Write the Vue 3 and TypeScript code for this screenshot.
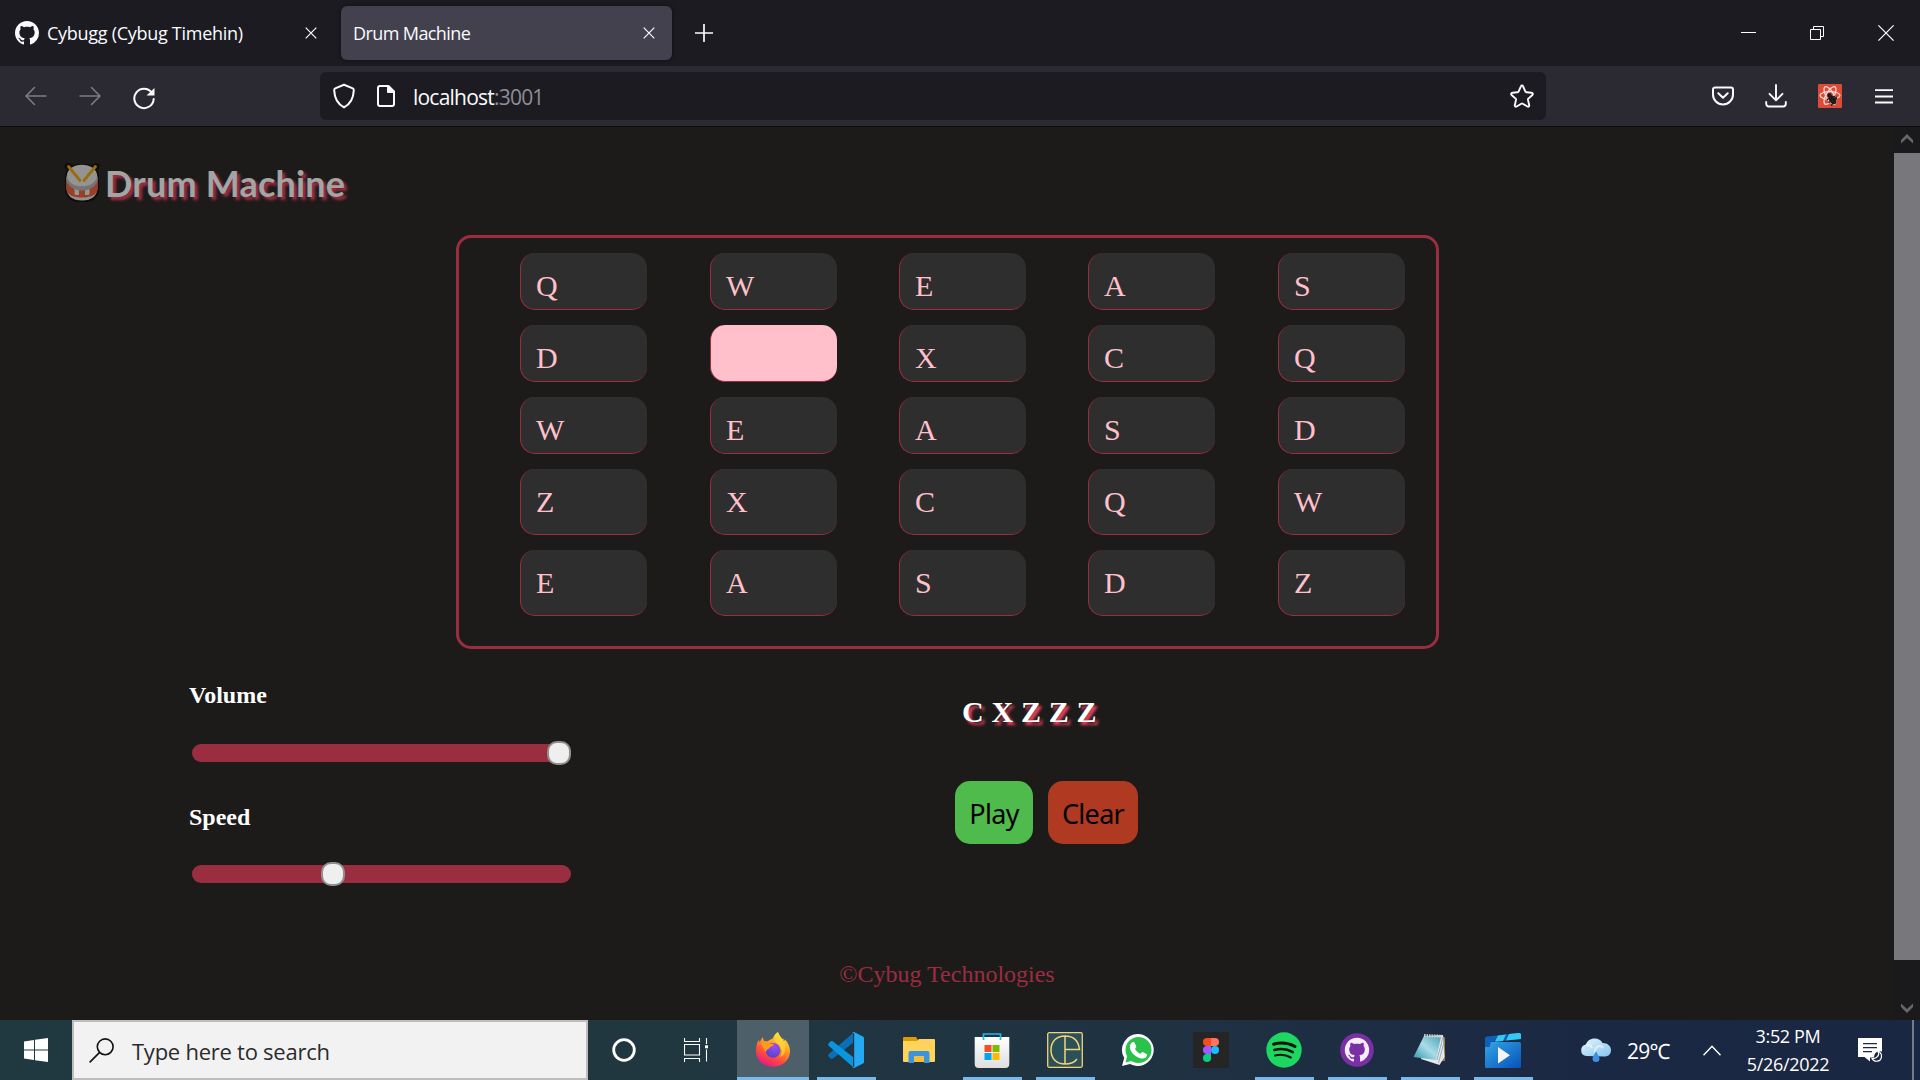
<script setup lang="ts">
interface Control {
  label: string
  value: number
}

const rows: string[][] = [
  ['Q', 'W', 'E', 'A', 'S'],
  ['D', 'Z', 'X', 'C', 'Q'],
  ['W', 'E', 'A', 'S', 'D'],
  ['Z', 'X', 'C', 'Q', 'W'],
  ['E', 'A', 'S', 'D', 'Z'],
]
const active = { row: 1, col: 1 }
const played: string[] = ['C', 'X', 'Z', 'Z', 'Z']
const controls: Control[] = [
  { label: 'Volume', value: 1 },
  { label: 'Speed', value: 0.3634 },
]
const thumbOffset = (value: number): string => `${Math.round(value * 355)}px`
</script>

<template>
  <div class="screen">
    <header class="tabs">
      <div class="tab">
        <svg class="gh" width="24" height="24" viewBox="0 0 16 16"><path fill="#fbfbfe" d="M8 0C3.58 0 0 3.58 0 8c0 3.54 2.29 6.53 5.47 7.59.4.07.55-.17.55-.38 0-.19-.01-.82-.01-1.49-2.01.37-2.53-.49-2.69-.94-.09-.23-.48-.94-.82-1.13-.28-.15-.68-.52-.01-.53.63-.01 1.08.58 1.23.82.72 1.21 1.87.87 2.33.66.07-.52.28-.87.51-1.07-1.78-.2-3.64-.89-3.64-3.95 0-.87.31-1.59.82-2.15-.08-.2-.36-1.02.08-2.12 0 0 .67-.21 2.2.82.64-.18 1.32-.27 2-.27s1.36.09 2 .27c1.53-1.04 2.2-.82 2.2-.82.44 1.1.16 1.92.08 2.12.51.56.82 1.27.82 2.15 0 3.07-1.87 3.75-3.65 3.95.29.25.54.73.54 1.48 0 1.07-.01 1.93-.01 2.2 0 .21.15.46.55.38A8.01 8.01 0 0 0 16 8c0-4.42-3.58-8-8-8z" /></svg>
        <span class="ui tab-a">Cybugg (Cybug Timehin)</span>
        <svg class="x" width="12" height="12" viewBox="0 0 12 12"><path d="M.7.7l10.6 10.6M11.3.7L.7 11.3" stroke="#fbfbfe" stroke-width="1.2" /></svg>
      </div>
      <div class="tab current">
        <span class="ui tab-b">Drum Machine</span>
        <svg class="x" width="12" height="12" viewBox="0 0 12 12"><path d="M.7.7l10.6 10.6M11.3.7L.7 11.3" stroke="#fbfbfe" stroke-width="1.2" /></svg>
      </div>
      <svg class="plus" width="18" height="18" viewBox="0 0 18 18"><path d="M9 .5v17M.5 9h17" stroke="#fbfbfe" stroke-width="1.7" stroke-linecap="round" /></svg>
      <div class="window-buttons">
        <svg width="15" height="16" viewBox="0 0 15 16"><path d="M0 7.5h15" stroke="#fff" /></svg>
        <svg width="14" height="14" viewBox="0 0 14 14" fill="none" stroke="#fff"><path d="M.5 3.5h10v10h-10zM3.500 3.500v-3h10v10h-3" /></svg>
        <svg width="16" height="16" viewBox="0 0 16 16"><path d="M.4.4l15.200 15.200M15.600.4L.4 15.600" stroke="#fff" stroke-width="1.2" /></svg>
      </div>
    </header>

    <nav class="toolbar">
      <div class="history">
        <svg width="22" height="20" viewBox="0 0 22 20" fill="none" stroke="#7c7b82" stroke-width="1.6" stroke-linecap="round" stroke-linejoin="round"><path d="M21 10H1M9.500 1.500L1 10l8.500 8.500" /></svg>
        <svg width="22" height="20" viewBox="0 0 22 20" fill="none" stroke="#7c7b82" stroke-width="1.6" stroke-linecap="round" stroke-linejoin="round"><path d="M1 10h20M12.500 1.500L21 10l-8.500 8.500" /></svg>
        <svg class="reload" width="24" height="24" viewBox="0 0 24 24" fill="none" stroke="#fbfbfe" stroke-width="2" stroke-linecap="round"><path d="M19.800 6.600A9.700 9.700 0 1 0 21.700 13" /><path d="M22.500 2v7.500h-8z" fill="#fbfbfe" stroke="none" /></svg>
      </div>
      <div class="address">
        <svg width="22" height="26" viewBox="0 0 22 26" fill="none" stroke="#fbfbfe" stroke-width="2" stroke-linejoin="round"><path d="M11 1.800l8.800 3.600c1 .4 1 1 1 2-.3 7-3 13.500-9.800 17C4.200 20.900 1.500 14.400 1.200 7.400c0-1 0-1.600 1-2z" /></svg>
        <svg class="doc" width="18" height="22" viewBox="0 0 18 22" fill="none" stroke="#fbfbfe" stroke-width="2" stroke-linejoin="round"><path d="M3 1h8.500L17 6.500V19a2 2 0 0 1-2 2H3a2 2 0 0 1-2-2V3a2 2 0 0 1 2-2z" /><path d="M10.500 1v6.500H17L11.500 1z" fill="#fbfbfe" stroke-width="1" /></svg>
        <span class="ui url">localhost<span class="port">:3001</span></span>
        <svg class="star" width="24" height="24" viewBox="0 0 24 24" fill="none" stroke="#fbfbfe" stroke-width="1.900" stroke-linejoin="round"><path d="M12 1.500c.5 0 .9.3 1.100.8l2.200 5.100c.2.500.6.8 1.100.8l5.200.6c1.200.1 1.700 1.400.8 2.200l-4 3.600c-.4.300-.5.8-.4 1.300l1.200 5.300c.2 1.100-.8 1.900-1.800 1.300l-4.700-2.800c-.5-.300-.9-.300-1.400 0L6.600 22.500c-1 .6-2-.2-1.800-1.300L6 15.900c.1-.500 0-1-.4-1.300L1.600 11c-.9-.8-.4-2.100.8-2.200l5.200-.6c.5 0 .9-.300 1.100-.8l2.200-5.100c.2-.500.6-.8 1.100-.8z" /></svg>
      </div>
      <div class="extensions">
        <svg width="22" height="20" viewBox="0 0 22 20" fill="none" stroke="#fbfbfe" stroke-width="2" stroke-linecap="round" stroke-linejoin="round"><path d="M3 1.400h16a2 2 0 0 1 2 2V8.500a10 10 0 0 1-20 0V3.400a2 2 0 0 1 2-2zM6.300 7.200l4.700 4.500 4.700-4.500" /></svg>
        <svg class="download" width="22" height="24" viewBox="0 0 22 24" fill="none" stroke="#fbfbfe" stroke-width="1.900" stroke-linecap="round" stroke-linejoin="round"><path d="M11 1v15M4.500 9.800L11 16.300l6.500-6.500M1.200 18v1.800a2.700 2.700 0 0 0 2.700 2.700h14.200a2.700 2.700 0 0 0 2.700-2.700V18" /></svg>
        <svg class="react" width="24" height="24" viewBox="0 0 24 24"><rect width="24" height="24" rx="1" fill="#dc4a38" /><g fill="none" stroke="#f7dcd6" stroke-width="1.300"><ellipse cx="12" cy="11.500" rx="10" ry="3.900" /><ellipse cx="12" cy="11.500" rx="10" ry="3.900" transform="rotate(60 12 11.500)" /><ellipse cx="12" cy="11.500" rx="10" ry="3.900" transform="rotate(120 12 11.500)" /></g><g transform="rotate(-35 14 15)"><ellipse cx="14" cy="16" rx="3.200" ry="5" fill="#201b1b" /><circle cx="14" cy="10.500" r="2.200" fill="#201b1b" /><path d="M9.500 12.500l9 2M9 16h10M9.500 20l9-3" stroke="#201b1b" stroke-width="1.300" /></g></svg>
        <svg width="18" height="15" viewBox="0 0 18 15"><path d="M0 1.200h18M0 7.500h18M0 13.500h18" stroke="#fbfbfe" stroke-width="1.800" /></svg>
      </div>
    </nav>

    <div class="viewport">
      <main class="page">
        <h1 class="brand">
          <svg width="36" height="40" viewBox="0 0 36 40">
            <rect x="1" y="1" width="34" height="38" rx="13" fill="#050505" />
            <circle cx="4" cy="3.500" r="3.500" fill="#050505" /><circle cx="32" cy="3.500" r="3.500" fill="#050505" />
            <path d="M2.500 14h31v10c0 9-6 13.500-15.500 13.500S2.500 33 2.500 24z" fill="#e2e2e2" />
            <path d="M2.500 16h31v11c-1.500 5-6.500 7.500-15.500 7.500S4 32 2.500 27z" fill="#ee5630" />
            <path d="M10.500 24h4.500v8h-3a1.500 1.500 0 0 1-1.500-1.500zM21 24h4.500v6.500A1.500 1.500 0 0 1 24 32h-3z" fill="#e8e8e8" />
            <ellipse cx="18" cy="15.500" rx="15.700" ry="12" fill="#b0b0b0" /><ellipse cx="18" cy="12.500" rx="15" ry="10.800" fill="#e4e4e4" />
            <path d="M4.500 3.500L16 17.500M31.500 3.500L20 17.500" stroke="#e9a500" stroke-width="2.800" stroke-linecap="round" />
          </svg>
          <span>Drum Machine</span>
        </h1>

        <section class="board">
          <div v-for="(row, r) in rows" :key="r" class="pad-row" :class="{ tall: r > 2 }">
            <button v-for="(key, c) in row" :key="c" class="pad" :class="{ active: r === active.row && c === active.col }">{{ key }}</button>
          </div>
        </section>

        <section class="panel">
          <div class="sliders">
            <div v-for="item in controls" :key="item.label" class="control">
              <label>{{ item.label }}</label>
              <div class="track"><i class="thumb" :style="{ marginLeft: thumbOffset(item.value) }"></i></div>
            </div>
          </div>
          <div class="player">
            <div class="display">{{ played.join(' ') }}</div>
            <div class="buttons">
              <button class="play">Play</button>
              <button class="clear">Clear</button>
            </div>
          </div>
        </section>

        <footer>©Cybug Technologies</footer>
      </main>
      <aside class="scrollbar">
        <svg width="12" height="10" viewBox="0 0 12 10"><path d="M0 9.500V6l6-6 6 6v3.500L6 4z" fill="#67666b" /></svg>
        <div class="scroll-thumb"></div>
        <svg class="down" width="12" height="10" viewBox="0 0 12 10"><path d="M0 .5V4l6 6 6-6V.5L6 6z" fill="#67666b" /></svg>
      </aside>
    </div>

    <div class="taskbar">
      <div class="start"><svg width="24" height="24" viewBox="0 0 24 24" fill="#fff"><path d="M0 3.500L10 2v9.500H0zM11 1.800L24 0v11.500H11zM0 12.500h10V22L0 20.500zM11 12.500h13V24l-13-1.800z" /></svg></div>
      <div class="search">
        <svg width="25" height="25" viewBox="0 0 25 25" fill="none" stroke="#111" stroke-width="1.600"><circle cx="16.200" cy="8.800" r="7.900" /><path d="M10.600 14.400L.6 24.400" /></svg>
        <span class="ui">Type here to search</span>
      </div>
      <div class="cell first"><svg width="24" height="24" viewBox="0 0 24 24" fill="none"><circle cx="12" cy="12" r="10.300" stroke="#fff" stroke-width="2.800" /></svg></div>
      <div class="cell second"><svg width="24" height="24" viewBox="0 0 24 24" fill="none" stroke="#fff" stroke-width="1.100"><path d="M.5 0v3.500h15V0M.5 24v-3.500h15V24M.5 6.500h15v10.500H.5zM22.500 0v6M22.500 11.500V23.500" /><path d="M21 7.300h3v3h-3z" fill="#fff" stroke="none" /></svg></div>
      <div class="cell focused">
        <svg width="36" height="36" viewBox="0 0 36 36">
          <defs><linearGradient id="fx" x1=".8" y1="0" x2=".3" y2="1"><stop offset="0" stop-color="#fff14a" /><stop offset=".4" stop-color="#ff9f22" /><stop offset=".7" stop-color="#ff4a3e" /><stop offset="1" stop-color="#e3188b" /></linearGradient><radialGradient id="fp" cx=".6" cy=".25" r=".8"><stop offset="0" stop-color="#a04bf5" /><stop offset="1" stop-color="#4b46c8" /></radialGradient></defs>
          <path fill="url(#fx)" d="M23 0c1 3 3 5 4.500 7l1-.5.3 3 1.200-2c3 3 5 7.500 5 11.500 0 9-7 15.700-17 15.700S1 28 1 19C1 14 2 10 4 8l.6 2.500L7.500 5l1.500 4 4 .3C15 7 18 7 18 6c1-3 3-5 5-6z" />
          <circle cx="18" cy="18.300" r="7.400" fill="url(#fp)" />
          <path fill="#ff9a20" d="M6 11c3-1 5-1 7 .2 3 .8 5 .3 6 1-1 2.500-4 2-5 4.500-1 0-2.500 1-3.200 3.300C8 17 8 14 6 11z" /><path fill="#ffd83a" opacity=".75" d="M23 0c0 6 9 9 7 17 0 4-2 7-5 8 3-4 2-9-2-13-4-2-5-7 0-12z" />
        </svg>
      </div>
      <div class="cell open"><svg width="36" height="36" viewBox="0 0 36 36"><path fill="#0a6fb7" d="M25 1v10L5 26.500c-1 .6-2 .5-2.600-.1L.7 24.700c-.7-.8-.7-1.800.2-2.600z" /><path fill="#0995df" d="M25 35V25L5 9.500c-1-.6-2-.5-2.600.1L.7 11.300c-.7.8-.7 1.800.2 2.600z" /><path fill="#25a9f2" d="M26.500.3L35 4.400c.6.300 1 .9 1 1.600v24c0 .7-.4 1.300-1 1.600l-8.500 4.100c-1 .4-2 .1-2.600-.7 1 .6 2.300 0 2.300-1.300V2.300C26.200 1 25 .4 23.900 1c.6-.8 1.600-1.100 2.600-.7z" /></svg></div>
      <div class="cell"><svg width="36" height="36" viewBox="0 0 36 36"><path fill="#dc9a00" d="M2 6a1 1 0 0 1 1-1h12l2 3v4H2z" /><path fill="#ffd35c" d="M2 9h14l2-2h15a1 1 0 0 1 1 1v21a1 1 0 0 1-1 1H3a1 1 0 0 1-1-1z" /><path fill="#3d94da" d="M9.500 19h17a2 2 0 0 1 2 2v10H23v-7H13v7H7.500V21a2 2 0 0 1 2-2z" /><path fill="#f6bd3c" d="M13 24h10v6H13z" /></svg></div>
      <div class="cell open"><svg width="36" height="36" viewBox="0 0 36 36"><defs><linearGradient id="st" x2="0" y2="1"><stop stop-color="#fff" /><stop offset="1" stop-color="#dedede" /></linearGradient></defs><path d="M.7 5h34.600v27a4 4 0 0 1-4 4H4.700a4 4 0 0 1-4-4z" fill="url(#st)" /><path d="M9.500 8V2h17v6" fill="none" stroke="#20b6ee" stroke-width="1.700" /><path fill="#f25022" d="M10.500 13h7v7h-7z" /><path fill="#7fba00" d="M18.500 13h7v7h-7z" /><path fill="#00a4ef" d="M10.500 21h7v7h-7z" /><path fill="#ffb900" d="M18.500 21h7v7h-7z" /></svg></div>
      <div class="cell open"><svg width="36" height="36" viewBox="0 0 36 36" fill="none" stroke="#f2d27c"><rect x=".7" y=".7" width="34.600" height="34.600" rx="1.500" fill="#2b5057" stroke-width="1.300" /><path stroke-width="1.500" d="M30 27c-2.500 3.500-6.500 5-12 5C9.500 32 4 26.500 4 18S9.500 4 18 4c8.500 0 13.500 5 14.500 13.500H18M18 4v28" /></svg></div>
      <div class="cell"><svg width="34" height="34" viewBox="0 0 34 34"><path fill="#fff" d="M17.500 1A16 16 0 1 1 9 31L1 33l2.200-8A16 16 0 0 1 17.500 1z" /><circle cx="17.500" cy="17" r="13" fill="#29c34c" /><path fill="#29c34c" d="M4.500 29.500l1.800-7 5 5.300z" /><path fill="#fff" d="M11 9.500c1-.8 2.300-.6 2.800.4l1.400 3.300c.3.800-.2 1.500-1.200 2.500 1.300 2.400 3 4 5.500 5.100 1.200-1.500 1.800-2 2.600-1.600l3.400 1.700c.9.400.8 1.500.1 2.700-1.300 2-4 2.400-6.400 1.600-5.500-1.800-8.500-5.200-10-9-.8-2.400-.2-5.200 1.800-6.700z" /></svg></div>
      <div class="cell"><svg width="36" height="36" viewBox="0 0 36 36"><rect width="36" height="36" rx="2" fill="#252525" /><path fill="#f24e1e" d="M18 6h-4a4 4 0 0 0 0 8h4z" /><path fill="#ff7262" d="M18 6h4a4 4 0 0 1 0 8h-4z" /><path fill="#a259ff" d="M18 14h-4a4 4 0 0 0 0 8h4z" /><circle cx="22" cy="18" r="4" fill="#1abcfe" /><path fill="#0acf83" d="M18 22h-4a4 4 0 1 0 4 4z" /></svg></div>
      <div class="cell open"><svg width="36" height="36" viewBox="0 0 36 36" fill="none" stroke="#0b130d" stroke-linecap="round"><circle cx="18" cy="18" r="17.700" fill="#1ed760" stroke="none" /><path stroke-width="3" d="M7.500 12.200c7-2 15-1.300 21.500 2.300" /><path stroke-width="2.500" d="M8.300 18c6.500-1.700 13-1 18.600 2.200" /><path stroke-width="2.100" d="M9 23.500c5.500-1.300 11-.8 15.800 2" /></svg></div>
      <div class="cell open"><svg width="34" height="34" viewBox="0 0 34 34"><circle cx="17" cy="17" r="16.800" fill="#7b2fa5" /><g transform="translate(4.800 4.800) scale(1.525)"><path fill="#f4eef8" d="M8 0C3.580 0 0 3.580 0 8c0 3.540 2.290 6.530 5.470 7.590.4.070.55-.17.55-.38 0-.19-.01-.82-.01-1.490-2.010.37-2.530-.49-2.690-.94-.09-.23-.48-.94-.82-1.130-.28-.15-.68-.52-.01-.53.63-.01 1.080.58 1.230.82.72 1.210 1.870.87 2.330.66.070-.52.28-.87.510-1.070-1.780-.2-3.640-.89-3.640-3.950 0-.87.310-1.590.82-2.150-.08-.2-.36-1.020.08-2.120 0 0 .67-.21 2.200.82.64-.18 1.320-.27 2-.27s1.360.09 2 .27c1.530-1.040 2.200-.82 2.200-.82.44 1.100.16 1.920.08 2.120.51.56.82 1.270.82 2.150 0 3.070-1.870 3.750-3.650 3.950.29.25.54.73.54 1.480 0 1.070-.01 1.930-.01 2.200 0 .21.15.46.55.38A8.010 8.010 0 0 0 16 8c0-4.420-3.580-8-8-8z" /></g></svg></div>
      <div class="cell open"><svg width="36" height="36" viewBox="0 0 36 36"><defs><linearGradient id="np" x1="0" y1="1" x2="1" y2="0"><stop stop-color="#2d93a8" /><stop offset=".5" stop-color="#a9dde8" /><stop offset="1" stop-color="#4ea4b6" /></linearGradient></defs><path fill="#a77a36" d="M30 4l3 1.500V29h-5z" /><path fill="#e3e9ec" d="M12 4l19-1 1.500 22-5 8L9 27z" /><path fill="url(#np)" d="M12 4l17 1-5 23L1.500 25z" /><path d="M25 28l6-23M26.500 31l5.500-21" stroke="#9daeb5" fill="none" /><path d="M12 3.500l18 .8" stroke="#c8ced1" stroke-width="3" stroke-dasharray="1.500 1" /></svg></div>
      <div class="cell open"><svg width="36" height="36" viewBox="0 0 36 36"><defs><linearGradient id="mv" x2="1" y2="1"><stop stop-color="#35a5e6" /><stop offset="1" stop-color="#0652b8" /></linearGradient></defs><rect y="10" width="36" height="26" rx="1.500" fill="url(#mv)" /><path fill="#0f60b8" d="M0 6.500a2 2 0 0 1 2-2L34 1c1 0 2 .5 2 1.500V7L6 10l-1.500 5H0z" /><path fill="#35c8f5" d="M13 3.400l8-1-3 6.500-8 .8zM24 2l9-1c2 0 3 .5 3 1.500V7l-15 1.500z" /><path fill="#f4f4f4" d="M13 15l12 8.200L13 31.500z" /></svg></div>

      <div class="tray">
        <svg width="32" height="24" viewBox="0 0 32 24"><defs><linearGradient id="cl" x2="1" y2="1"><stop stop-color="#e4f6ff" /><stop offset="1" stop-color="#86c4ef" /></linearGradient></defs><path fill="url(#cl)" d="M6.500 18A5.800 5.800 0 0 1 6 6.500C7 2.700 10.500.5 14.500.5s6.500 1.500 8 4.500c4-.3 8.500 2.500 8.500 7S28 18.500 24.500 18.500z" /><path d="M6 7c2-1 5 0 6 3M15 15c-1-6 5-9 8-5" stroke="#fff" opacity=".6" stroke-width="2" fill="none" /><path fill="#3f90e2" d="M16 13c1 3 3.500 5 3.500 7.500a3.500 3.500 0 0 1-7 0C12.500 18 15 16 16 13z" /></svg>
        <span class="ui temp">29℃</span>
        <svg class="chev" width="18" height="11" viewBox="0 0 18 11" fill="none" stroke="#fff" stroke-width="1.400"><path d="M.5 10.200L9 1.200l8.500 9" /></svg>
        <div class="clock ui"><span class="time">3:52 PM</span><span class="date">5/26/2022</span></div>
        <svg width="25" height="25" viewBox="0 0 25 25"><path fill="#fff" d="M0 0h24v13.500a6 6 0 0 0-8 6H12v4L6.500 19H0z" /><path d="M5 5.700h14M5 9.700h14M5 13.700h9" stroke="#1b2942" stroke-width="1.200" /><path d="M20 13c2 4-1 8-6 7.500 2 4 9.500 4 9.500-2.500 0-2-1.500-4-3.500-5z" fill="#1b2942" stroke="#fff" stroke-width="1.200" /></svg>
        <i class="peek"></i>
      </div>
    </div>
  </div>
</template>

<style>
body { margin: 0; overflow: hidden; background: #1c1b19; }
</style>

<style scoped>
* { box-sizing: border-box; }
svg { display: block; flex: none; }
button { margin: 0; border: 0; display: block; }
.screen { width: 1920px; height: 1080px; display: flex; flex-direction: column; font-family: "Liberation Serif", serif; overflow: hidden; }
.ui { font-family: "Open Sans", "Noto Sans", sans-serif; white-space: nowrap; }

.tabs { height: 66px; flex: none; display: flex; align-items: center; background: #1c1b22; color: #fbfbfe; }
.tab { height: 54px; width: 331px; display: flex; align-items: center; padding: 0 17px 0 12px; border-radius: 6px; font-size: 18px; }
.tab:first-child { margin-left: 3px; margin-right: 7px; }
.tab .x { margin-left: auto; }
.gh { margin-right: 8px; }
.tab-a { letter-spacing: -0.28px; }
.tab-b { letter-spacing: -0.6px; }
.current { background: #42414d; box-shadow: 0 0 4px #0008; }
.plus { margin-left: 23px; }
.window-buttons { margin-left: auto; padding-right: 26px; display: flex; align-items: center; gap: 54px; }

.toolbar { height: 61px; flex: none; display: flex; align-items: center; background: #2b2a33; border-bottom: 1px solid #0c0c0d; }
.history { width: 320px; padding-left: 25px; display: flex; align-items: center; gap: 32px; }
.reload { margin: 3px 0 0 -1px; }
.address { width: 1226px; height: 48px; padding: 0 12px 0 13px; display: flex; align-items: center; background: #1c1b22; border-radius: 6px; }
.doc { margin-left: 22px; }
.url { margin-left: 18px; padding-top: 2px; font-size: 21px; letter-spacing: -0.78px; color: #fbfbfe; }
.port { color: #8f8e95; }
.star { margin-left: auto; }
.extensions { margin-left: auto; padding-right: 27px; display: flex; align-items: center; }
.download { margin: 0 31px; }
.react { margin-right: 33px; }

.viewport { height: 893px; flex: none; display: flex; }
.page { width: 1894px; background: #1c1b19; display: flex; flex-direction: column; }
.brand { height: 108px; margin: 0; padding: 36px 0 0 64px; display: flex; gap: 5px; opacity: 0.6; font: bold 36px/40px Lato, sans-serif; letter-spacing: 0.2px; color: #fff; text-shadow: 3px 3px 3px #ff3c63; }
.board { width: 983px; height: 414px; margin-left: 456px; padding: 15px 31px 27px 61px; display: flex; flex-direction: column; gap: 15px; border: 3px solid #9b2d41; border-radius: 15px; }
.pad-row { height: 57px; display: grid; grid-template-columns: 190px 189px 189px 190px 127px; }
.tall { height: 66px; }
.pad { width: 127px; height: 100%; padding: 16px 15px 0; display: flex; align-items: flex-start; background: #2e2e2e; border-left: 1px solid #9b2d41; border-bottom: 1px solid #9b2d41; border-radius: 15px; font: 30px/34px "Liberation Serif", serif; color: pink; }
.pad.active { background: pink; }

.panel { height: 274px; display: flex; }
.sliders { width: 955px; padding: 32px 0 0 189px; }
.control { height: 121px; }
.control label { display: block; height: 60px; font-weight: bold; font-size: 24px; line-height: 28px; color: #fff; }
.control:last-child label { padding-top: 1px; }
.track { width: 379px; height: 18px; margin: 3px 0 0 3px; display: flex; align-items: center; background: #9b2d41; border-radius: 9px; }
.thumb { width: 24px; height: 24px; flex: none; background: #efefef; border: 2px solid #8f8f8f; border-radius: 10px; }
.player { padding-top: 46px; }
.display { height: 86px; padding-left: 7px; font-weight: bold; font-size: 30px; line-height: 34px; letter-spacing: 0.15px; color: #fff; text-shadow: 3px 3px 3px #f04263; }
.buttons { display: flex; gap: 15px; }
.buttons button { height: 63px; padding: 1px 0 0; border-radius: 15px; font-family: "Noto Sans", sans-serif; font-size: 27px; letter-spacing: -0.7px; color: #000; }
.play { width: 78px; background: #4ebb4c; }
.clear { width: 90px; background: #b03a21; }
footer { padding-top: 37px; text-align: center; font-size: 24px; line-height: 28px; color: #9b2d41; }
.scrollbar { width: 26px; padding: 7px 0; display: flex; flex-direction: column; align-items: center; background: #1a191c; }
.scroll-thumb { width: 26px; height: 807px; margin-top: 9px; background: #78777b; }
.down { margin-top: auto; }

.taskbar { height: 60px; flex: none; display: flex; background: linear-gradient(90deg, #20383f 0%, #203740 35%, #1f3242 60%, #1b2843 82%, #1a2743 100%); color: #fff; }
.start { width: 72px; display: flex; align-items: center; justify-content: center; }
.search { width: 516px; padding-left: 15px; display: flex; align-items: center; gap: 18px; background: #f2f2f2; border: 2px solid #bdbdbd; color: #2b2b2b; font-size: 22px; letter-spacing: -0.25px; }
.search span { padding-top: 2px; }
.cell { width: 73px; padding-right: 1px; display: flex; align-items: center; justify-content: center; position: relative; }
.first { width: 72px; padding-right: 0; }
.second { width: 77px; padding-right: 5px; }
.focused { width: 72px; margin-right: 1px; background: #4d5f68; border-bottom: 3px solid #76b9ed; padding: 3px 0 0; }
.open::after { content: ""; position: absolute; left: 7px; bottom: 0; width: 59px; height: 3px; background: #76b9ed; }
.tray { flex: 1; padding-left: 40px; display: flex; align-items: center; }
.temp { width: 77px; padding: 2px 0 0 15px; font-size: 21px; letter-spacing: -0.7px; }
.clock { width: 137px; padding-right: 3px; display: flex; flex-direction: column; align-items: center; font-size: 18px; line-height: 28px; }
.time { letter-spacing: -0.35px; }
.date { letter-spacing: -0.3px; }
.chev { margin-left: 14px; }
.peek { width: 2px; height: 60px; margin-left: 29px; background: #747b89; }
</style>
